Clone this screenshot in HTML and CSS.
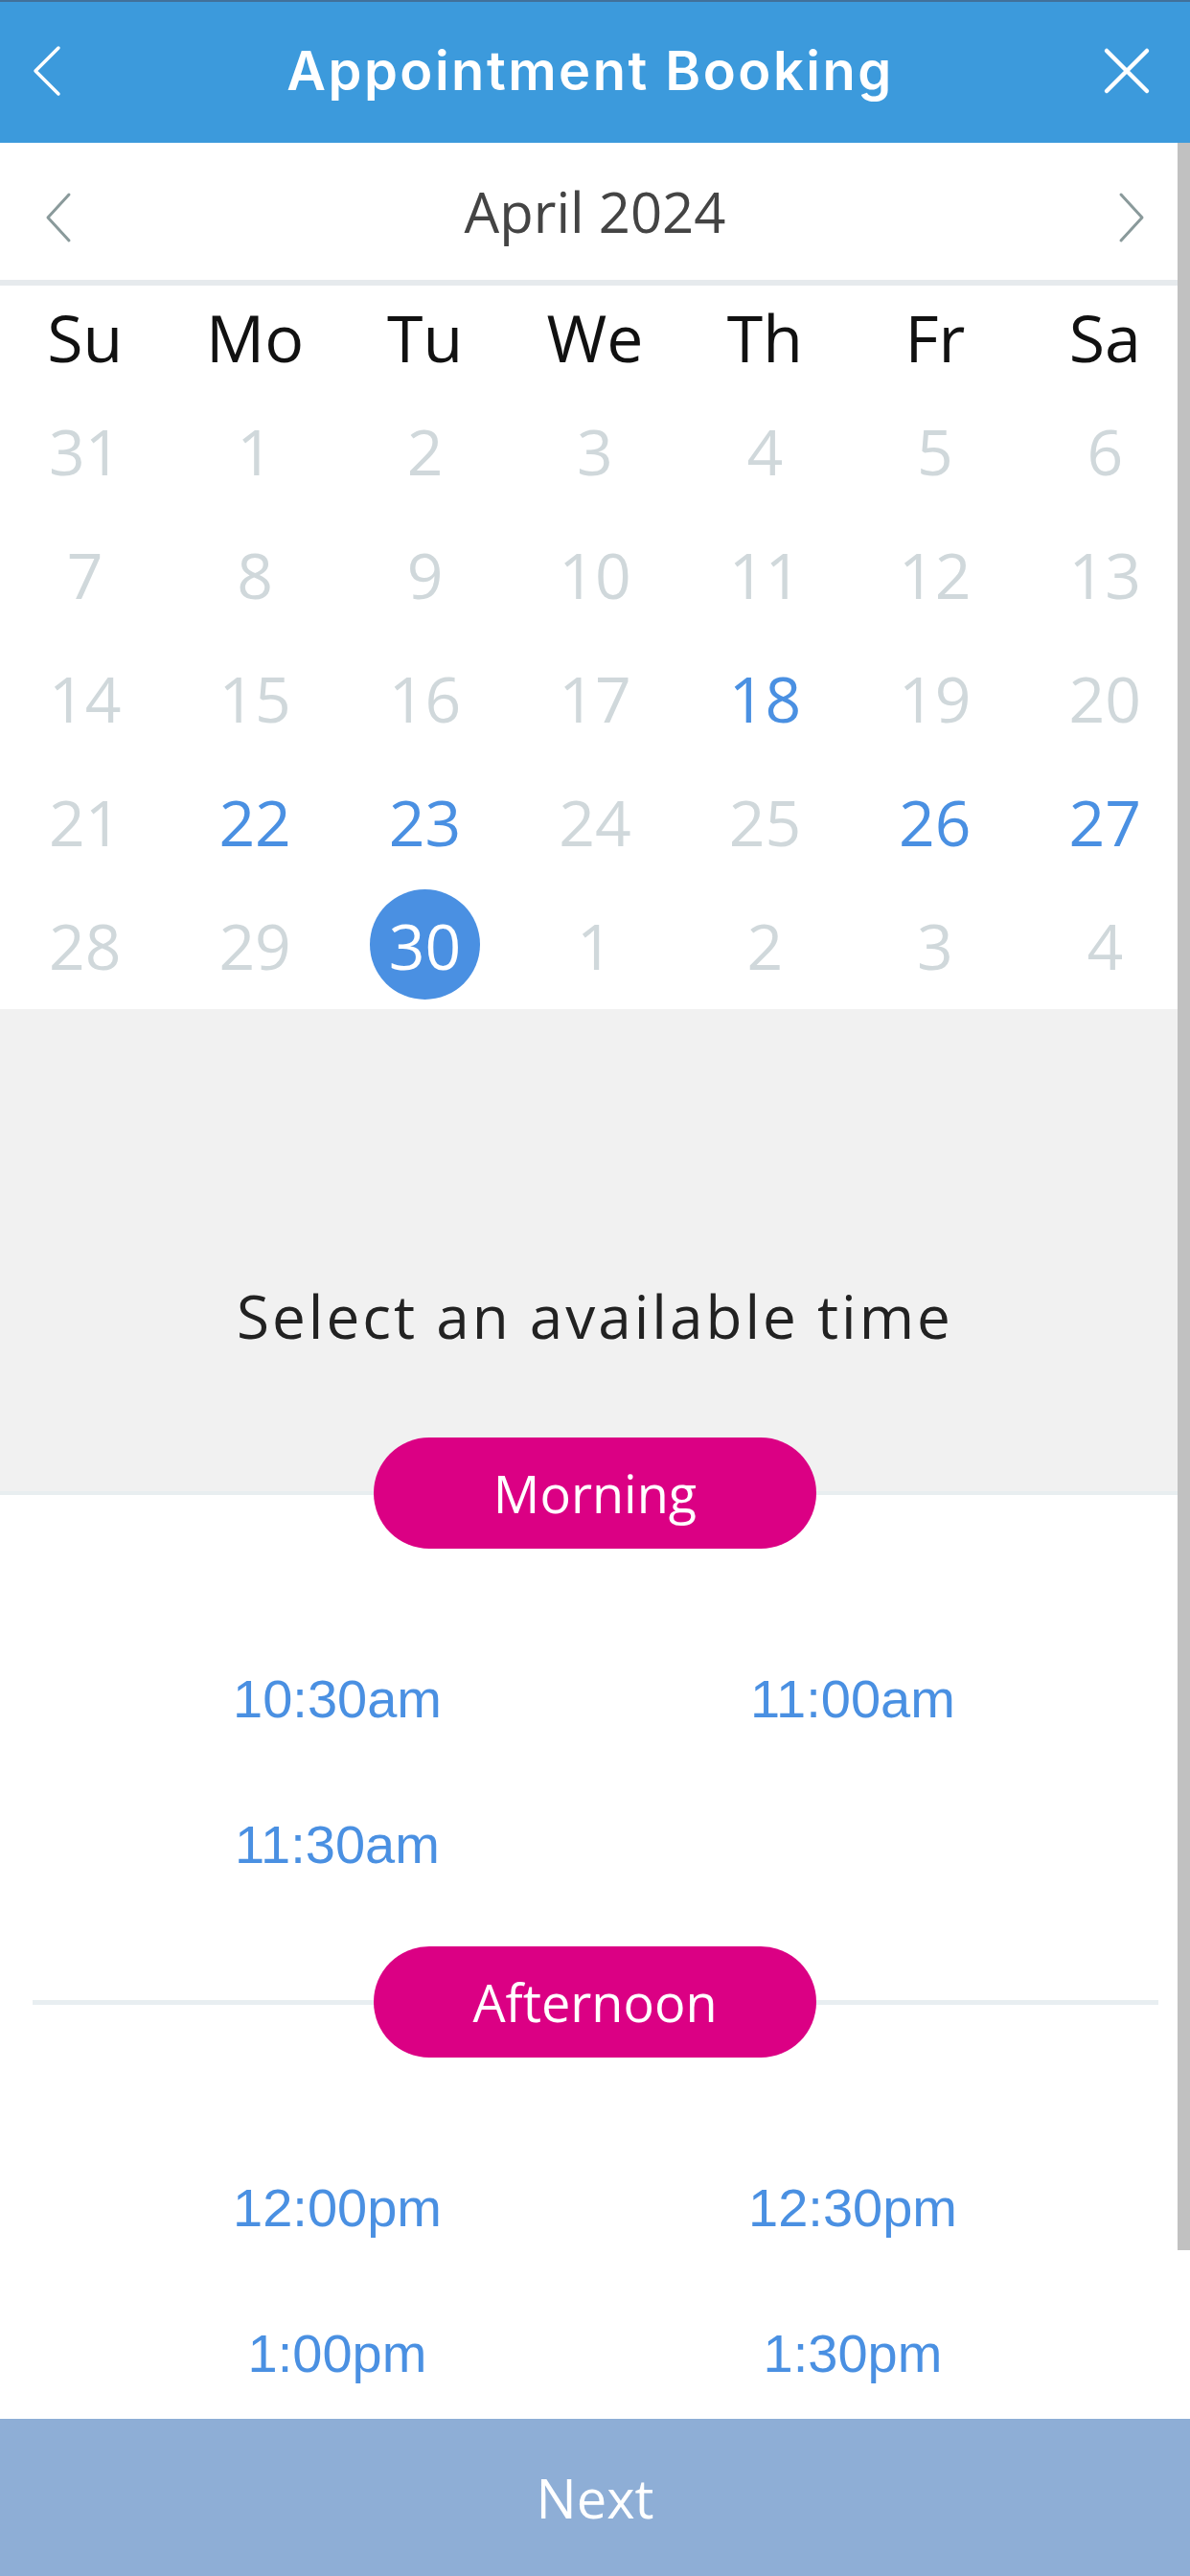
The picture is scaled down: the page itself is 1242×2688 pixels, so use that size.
FILE: index.html
```html
<!DOCTYPE html>
<html>
<head>
<meta charset="utf-8">
<title>Appointment Booking</title>
<link rel="stylesheet" href="styles.css">
</head>
<body>
  <div class="app">
    <header class="topbar">
      <button class="icon-btn back" aria-label="Back">
        <svg width="36" height="56" viewBox="0 0 36 56"><path d="M31 4 L7 28 L31 52" /></svg>
      </button>
      <h1 class="title">Appointment Booking</h1>
      <button class="icon-btn close" aria-label="Close">
        <svg width="52" height="52" viewBox="0 0 52 52"><path d="M5 5 L47 47 M47 5 L5 47" /></svg>
      </button>
    </header>

    <main class="scroller">
      <div class="month-nav">
        <svg class="nav-arrow" width="30" height="54" viewBox="0 0 30 54"><path d="M26 3 L4 27 L26 51" /></svg>
        <span class="month-label">April 2024</span>
        <svg class="nav-arrow" width="30" height="54" viewBox="0 0 30 54"><path d="M4 3 L26 27 L4 51" /></svg>
      </div>

      <div class="calendar">
        <div class="weekday">Su</div>
        <div class="weekday">Mo</div>
        <div class="weekday">Tu</div>
        <div class="weekday">We</div>
        <div class="weekday">Th</div>
        <div class="weekday">Fr</div>
        <div class="weekday">Sa</div>

        <div class="day"><span>31</span></div>
        <div class="day"><span>1</span></div>
        <div class="day"><span>2</span></div>
        <div class="day"><span>3</span></div>
        <div class="day"><span>4</span></div>
        <div class="day"><span>5</span></div>
        <div class="day"><span>6</span></div>

        <div class="day"><span>7</span></div>
        <div class="day"><span>8</span></div>
        <div class="day"><span>9</span></div>
        <div class="day"><span>10</span></div>
        <div class="day"><span>11</span></div>
        <div class="day"><span>12</span></div>
        <div class="day"><span>13</span></div>

        <div class="day"><span>14</span></div>
        <div class="day"><span>15</span></div>
        <div class="day"><span>16</span></div>
        <div class="day"><span>17</span></div>
        <div class="day open"><span>18</span></div>
        <div class="day"><span>19</span></div>
        <div class="day"><span>20</span></div>

        <div class="day"><span>21</span></div>
        <div class="day open"><span>22</span></div>
        <div class="day open"><span>23</span></div>
        <div class="day"><span>24</span></div>
        <div class="day"><span>25</span></div>
        <div class="day open"><span>26</span></div>
        <div class="day open"><span>27</span></div>

        <div class="day"><span>28</span></div>
        <div class="day"><span>29</span></div>
        <div class="day selected"><span>30</span></div>
        <div class="day"><span>1</span></div>
        <div class="day"><span>2</span></div>
        <div class="day"><span>3</span></div>
        <div class="day"><span>4</span></div>
      </div>

      <section class="intro">
        <h2>Select an available time</h2>
      </section>

      <div class="period first"><span class="pill">Morning</span></div>
      <div class="slots">
        <a class="slot">10:30am</a>
        <a class="slot">11:00am</a>
        <a class="slot">11:30am</a>
      </div>

      <div class="period"><span class="pill">Afternoon</span></div>
      <div class="slots">
        <a class="slot">12:00pm</a>
        <a class="slot">12:30pm</a>
        <a class="slot">1:00pm</a>
        <a class="slot">1:30pm</a>
      </div>

      <div class="scroll-thumb"></div>
    </main>

    <footer class="next-bar">Next</footer>
  </div>
</body>
</html>
```

FILE: styles.css
```css
html, body {
  margin: 0;
  height: 100%;
  background: #fff;
}

.app {
  display: flex;
  flex-direction: column;
  height: 100vh;
  font-family: "Open Sans", "Noto Sans", sans-serif;
}

/* top bar */
.topbar {
  flex: none;
  box-sizing: border-box;
  height: 149px;
  display: grid;
  grid-template-columns: 1fr auto 1fr;
  align-items: center;
  padding: 0 40px 4px 30px;
  background: #3c9adc;
  border-top: 2px solid #41709a;
}

.icon-btn {
  border: 0;
  padding: 0;
  background: none;
  display: flex;
}

.icon-btn path {
  fill: none;
  stroke: #fff;
  stroke-linecap: round;
  stroke-linejoin: round;
}

.back { justify-self: start; }
.back path { stroke-width: 3.5; }
.close { justify-self: end; }
.close path { stroke-width: 4.5; }

.title {
  margin: 0;
  font-family: Inter, "Open Sans", sans-serif;
  font-weight: 600;
  font-size: 56px;
  line-height: 70px;
  letter-spacing: 2.5px;
  color: #fff;
}

/* scrolling content */
.scroller {
  flex: 1;
  position: relative;
  overflow: hidden;
}

.scroll-thumb {
  position: absolute;
  top: 0;
  right: 0;
  width: 13px;
  height: 2199px;
  background: #c1c1c1;
}

.month-nav {
  height: 143px;
  display: flex;
  align-items: center;
  justify-content: space-between;
  padding: 0 46px;
  border-bottom: 6px solid #e6eaed;
}

.nav-arrow {
  margin-top: 12px;
}

.nav-arrow path {
  fill: none;
  stroke: #8a9a9b;
  stroke-width: 3;
  stroke-linecap: round;
  stroke-linejoin: round;
}

.month-label {
  font-size: 58px;
  color: #444;
}

.calendar {
  display: grid;
  grid-template-columns: repeat(7, 1fr);
  grid-template-rows: 107px;
  grid-auto-rows: 129px;
  padding-bottom: 3px;
}

.weekday,
.day {
  display: flex;
  align-items: center;
  justify-content: center;
}

.weekday {
  font-size: 68px;
  color: #111;
}

.day {
  font-size: 66px;
  color: #d0d8db;
}

.day span {
  display: flex;
  align-items: center;
  justify-content: center;
  width: 115px;
  height: 115px;
  border-radius: 50%;
}

.day.open {
  color: #4a90e2;
}

.day.selected span {
  background: #4a90e2;
  color: #fff;
}

/* time picker */
.intro {
  box-sizing: border-box;
  height: 507px;
  padding-top: 278px;
  background: #f1f1f1;
  border-bottom: 4px solid #e8eef0;
}

.intro h2 {
  margin: 0;
  font-size: 62px;
  font-weight: 400;
  line-height: 84px;
  letter-spacing: 3px;
  text-align: center;
  color: #222;
}

.period {
  position: relative;
  display: flex;
  justify-content: center;
}

.period::before {
  content: "";
  position: absolute;
  left: 34px;
  right: 33px;
  top: 56px;
  height: 5px;
  background: #e8eef1;
}

.period.first {
  margin-top: -60px;
}

.period.first::before {
  display: none;
}

.pill {
  position: relative;
  width: 462px;
  height: 116px;
  border-radius: 58px;
  background: #db0084;
  color: #fff;
  font-size: 54px;
  display: flex;
  align-items: center;
  justify-content: center;
}

.slots {
  display: grid;
  grid-template-columns: 1fr 1fr;
  grid-auto-rows: 152px;
  padding: 80px 83px 31px;
}

.slot {
  display: flex;
  align-items: center;
  justify-content: center;
  font-family: "Liberation Sans", Arial, sans-serif;
  font-size: 56px;
  color: #4a90e2;
}

.next-bar {
  flex: none;
  height: 164px;
  display: flex;
  align-items: center;
  justify-content: center;
  background: #8eaed6;
  color: #fff;
  font-size: 56px;
}
```
